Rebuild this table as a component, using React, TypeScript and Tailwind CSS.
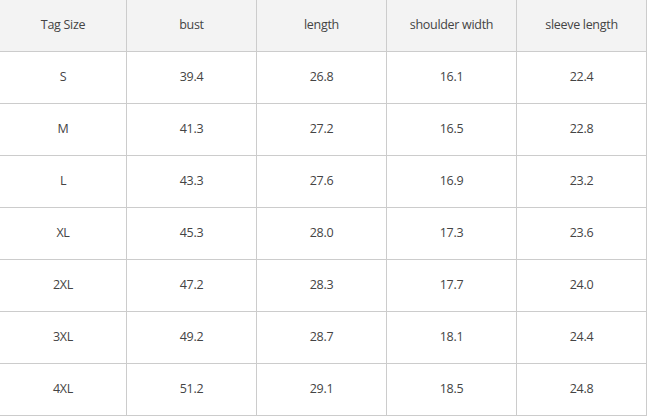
const headers = ['Tag Size', 'bust', 'length', 'shoulder width', 'sleeve length'];

const rows = [
  ['S', '39.4', '26.8', '16.1', '22.4'],
  ['M', '41.3', '27.2', '16.5', '22.8'],
  ['L', '43.3', '27.6', '16.9', '23.2'],
  ['XL', '45.3', '28.0', '17.3', '23.6'],
  ['2XL', '47.2', '28.3', '17.7', '24.0'],
  ['3XL', '49.2', '28.7', '18.1', '24.4'],
  ['4XL', '51.2', '29.1', '18.5', '24.8'],
];

export default function App() {
  return (
    <div className="w-[647px] h-[416px] bg-white overflow-hidden font-['Open_Sans',sans-serif] text-[12.5px] tracking-[-0.3px] text-[#444]">
      <div className="grid grid-cols-[127px_repeat(4,130px)]">
        {headers.map((h) => (
          <div
            key={h}
            className="h-[52px] flex items-center justify-center bg-[#f3f3f3] border-r border-b border-[#cccccc]"
          >
            {h}
          </div>
        ))}
        {rows.map((row) =>
          row.map((cell, i) => (
            <div
              key={row[0] + i}
              className="h-[52px] flex items-center justify-center border-r border-b border-[#cccccc]"
            >
              {cell}
            </div>
          ))
        )}
      </div>
    </div>
  );
}
